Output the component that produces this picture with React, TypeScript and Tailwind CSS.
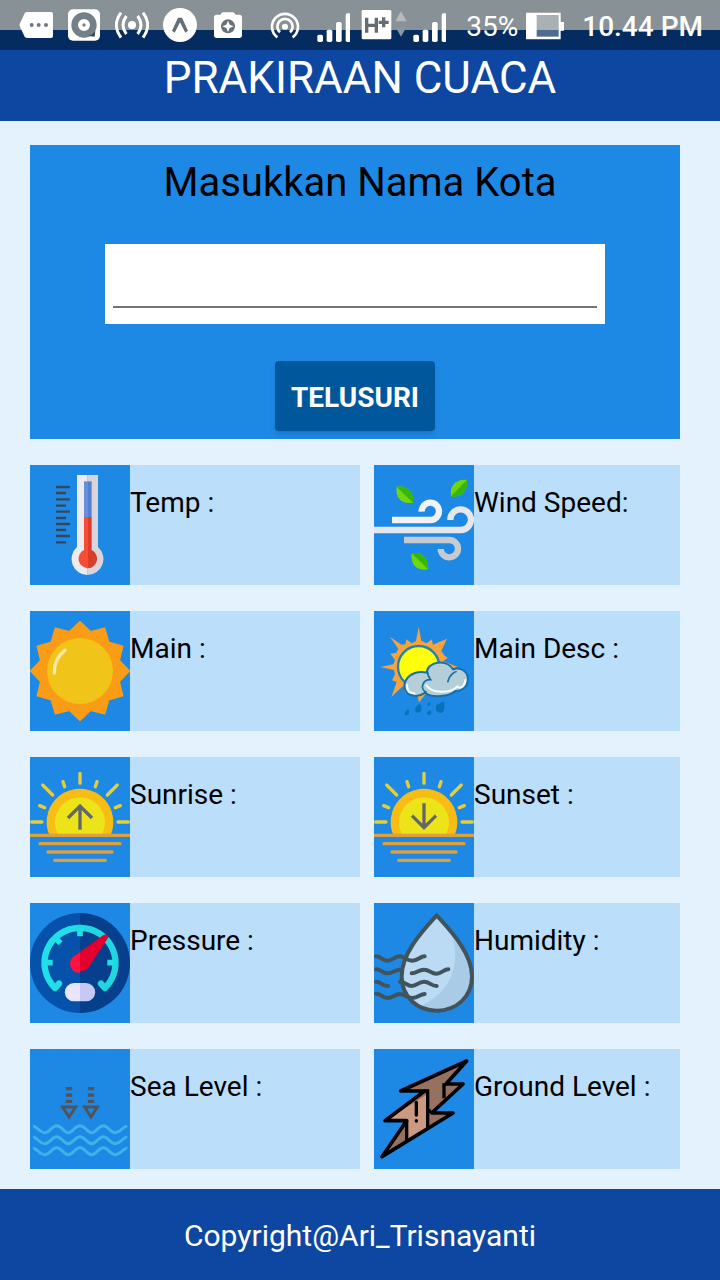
import type { ReactNode } from "react";

/* ---------- status bar ---------- */

function StatusIcon({ x, w = 102, className = "w-[34px]", children }: { x: number; w?: number; className?: string; children: ReactNode }) {
  return (
    <svg viewBox={`${x} 0 ${w} 150`} className={`h-[50px] shrink-0 ${className}`} fill="#fff" aria-hidden="true">
      {children}
    </svg>
  );
}

function SignalIcon({ className }: { className?: string }) {
  return (
    <StatusIcon x={948} className={className}>
      <rect x="952" y="104" width="17" height="22" rx="5" />
      <rect x="980" y="89" width="17" height="37" rx="5" />
      <rect x="1008" y="66" width="17" height="60" rx="5" />
      <rect x="1037" y="40" width="17" height="86" rx="5" />
    </StatusIcon>
  );
}

function StatusBar() {
  return (
    <div className="flex h-[50px] items-center bg-[linear-gradient(#889196_30px,#052c61_30px)] pr-[17px] pl-[19px] text-[28px] leading-8 text-white">
      <div className="flex gap-[14px]">
        <StatusIcon x={57}>
          <path d="M82 36H153Q159 36 159 42V108Q159 114 153 114H82Q77 114 74 110L60 80Q57 75 60 70L74 40Q77 36 82 36Z" />
          <g fill="#6d7880">
            <circle cx="95" cy="75" r="6" />
            <circle cx="116" cy="75" r="6" />
            <circle cx="138" cy="75" r="6" />
          </g>
        </StatusIcon>
        <StatusIcon x={201}>
          <rect x="204" y="28" width="96" height="94" rx="15" />
          <circle cx="252" cy="75" r="28" fill="none" stroke="#748087" strokeWidth="20" />
          <path d="M266 108Q280 103 286 92L284 110Z" fill="#32435a" />
          <circle cx="252" cy="75" r="5" fill="#748087" />
        </StatusIcon>
        <StatusIcon x={345}>
          <circle cx="396" cy="75" r="12" />
          <g fill="none" stroke="#fff" strokeWidth="9">
            <path d="M379 48Q359 75 379 102M413 48Q433 75 413 102M363 38Q335 75 363 113M429 38Q457 75 429 113" />
          </g>
        </StatusIcon>
        <StatusIcon x={489}>
          <circle cx="540" cy="75" r="51" />
          <path d="M516 92L534 53H546L564 92L556 98L540 67L524 98Z" fill="#637078" />
        </StatusIcon>
        <StatusIcon x={633}>
          <path d="M650 44H661L667 37H701L707 44H718Q726 44 726 52V106Q726 114 718 114H650Q642 114 642 106V52Q642 44 650 44Z" />
          <circle cx="684" cy="79" r="21" fill="#65727b" />
          <path d="M684 62L689 74L701 79L689 84L684 96L679 84L667 79L679 74Z" />
        </StatusIcon>
      </div>
      <div className="ml-auto flex items-center">
        <StatusIcon x={804}>
          <circle cx="855" cy="80" r="9" />
          <g fill="none" stroke="#fff" strokeWidth="8">
            <path d="M840 97A23 23 0 1 1 870 97M832 112A39 39 0 1 1 878 112" />
          </g>
        </StatusIcon>
        <SignalIcon className="ml-[14px] w-[34px]" />
        <StatusIcon x={1083} w={138} className="ml-[11px] w-[46px]">
          <rect x="1085" y="30" width="89" height="88" rx="4" />
          <path d="M1100 53V98M1129 53V98M1100 76H1129M1136 67H1166M1151 52V82" fill="none" stroke="#636d73" strokeWidth="10" />
          <path d="M1203 34L1220 64H1186Z" fill="#b4babd" />
          <path d="M1203 110L1220 80H1186Z" fill="#8796a8" />
        </StatusIcon>
        <SignalIcon className="ml-[5px] w-[34px]" />
        <span className="ml-5 pt-[3px]">35%</span>
        <StatusIcon x={1578} w={114} className="ml-2 w-[38px]">
          <path d="M1578 38H1682V66H1692V92H1682V118H1578Z" />
          <rect x="1610" y="45" width="66" height="45" fill="#a8b1b3" />
          <rect x="1610" y="90" width="66" height="20" fill="#506c91" />
        </StatusIcon>
        <time className="ml-[18px] pt-[3px] font-medium">10.44 PM</time>
      </div>
    </div>
  );
}

/* ---------- weather icons ---------- */

function Tile({ children }: { children: ReactNode }) {
  return (
    <svg viewBox="30 30 300 360" className="h-[120px] w-[100px] shrink-0 bg-[#1e88e5]" aria-hidden="true">
      {children}
    </svg>
  );
}

function Thermometer() {
  return (
    <Tile>
      <path d="M171 60H203V360A48 48 0 0 1 171 276Z" fill="#eeebef" />
      <path d="M203 60H234V276A48 48 0 0 1 203 360Z" fill="#d9d4dc" />
      <rect x="192" y="79" width="12" height="107" fill="#648fe0" />
      <rect x="204" y="79" width="11" height="107" fill="#5a7fca" />
      <path d="M204 186H192V285A29 29 0 0 0 204 340Z" fill="#fb4b32" />
      <path d="M204 186H215V285A29 29 0 0 1 204 340Z" fill="#d63f2b" />
      <g stroke="#34485c" strokeWidth="7">
        <path d="M108 96H150M108 133H150M108 170H150M108 207H150M108 243H150" />
        <path d="M108 114H138M108 152H138M108 189H138M108 225H138M108 262H138" />
      </g>
    </Tile>
  );
}

function Wind() {
  return (
    <Tile>
      <g fill="none" strokeWidth="19">
        <path d="M84 195H199A26 26 0 1 0 173 170" stroke="#f1f2f5" />
        <path d="M30 225H290A31 31 0 1 0 259 195" stroke="#e4e7ec" />
        <path d="M120 255H256A26 26 0 1 1 230 282" stroke="#c8cad1" />
      </g>
      <g id="leaf">
        <path d="M98 95C127 90 151 108 147 143C115 149 93 130 98 95Z" fill="#72d60f" />
        <path d="M98 95C127 90 151 108 147 143Z" fill="#35b60a" />
      </g>
      <use href="#leaf" x="45" y="200" />
      <path d="M308 75C280 71 255 90 261 124C292 129 313 108 308 75Z" fill="#72d60f" />
      <path d="M308 75L261 124C292 129 313 108 308 75Z" fill="#35b60a" />
    </Tile>
  );
}

const SUN_POINTS = Array.from({ length: 24 }, (_, i) => {
  const r = i % 2 ? 121 : 147;
  const a = (i * Math.PI) / 12;
  return `${(180 + r * Math.sin(a)).toFixed(1)},${(210 - r * Math.cos(a)).toFixed(1)}`;
}).join(" ");

function Sun() {
  return (
    <Tile>
      <polygon points={SUN_POINTS} fill="#fa9c16" stroke="#fa9c16" strokeWidth="6" strokeLinejoin="round" />
      <circle cx="180" cy="210" r="99" fill="#f0c419" />
      <path d="M103 216Q102 173 135 148" fill="none" stroke="#fce9a8" strokeWidth="10" strokeLinecap="round" />
    </Tile>
  );
}

function SunCloudRain() {
  return (
    <Tile>
      <path
        d="M164 78L172 119L188 127L203 115L207 131L249 113L232 150L240 162L251 171L237 181L282 198L240 211L165 304L157 267L130 262L124 279L118 254L82 288L98 243L84 238L93 220L90 207L49 198L88 190L93 177L79 158L97 155L103 143L78 108L113 131L124 130L127 115L143 127L156 120Z"
        fill="#f8a33a"
      />
      <circle cx="164" cy="197" r="62" fill="#ffff0a" stroke="#2681ab" strokeWidth="7" />
      <path
        d="M145 283C121 280 116 253 127 236C137 218 165 208 188 215C190 183 246 171 267 205C292 195 315 215 311 239C310 259 290 272 274 270C257 288 201 291 184 275C171 284 155 286 145 283Z"
        fill="#b5cfd9"
        stroke="#176fa8"
        strokeWidth="6"
      />
      <path d="M188 274C165 264 176 235 200 236C196 231 190 224 191 212M251 244C257 218 275 211 278 213" fill="none" stroke="#176fa8" strokeWidth="5" />
      <path d="M187 253C205 281 264 275 280 256C290 266 304 253 304 237M129 251C129 270 139 277 151 277" fill="none" stroke="#f4fcff" strokeWidth="6" strokeLinecap="round" />
      <g fill="#0872b9">
        <path d="M134 325C119 332 120 343 128 343C136 342 136 334 134 325ZM168 308C150 317 150 332 160 335C172 333 176 323 168 308ZM197 302C185 308 191 317 199 314ZM200 328C185 332 188 342 196 343C204 339 203 333 200 328ZM239 301L216 313C213 331 221 335 231 336C243 332 243 318 239 301Z" />
      </g>
    </Tile>
  );
}

function Horizon({ arrow }: { arrow: string }) {
  return (
    <Tile>
      <path d="M87 262A100 100 0 1 1 273 262Z" fill="#f7bd14" />
      <path d="M114 262A75 75 0 1 1 246 262Z" fill="#ece319" />
      <g fill="none" strokeWidth="10" strokeLinecap="round">
        <path d="M180 79V109M129 104L134 119M231 104L226 119M68 114L98 144M292 114L262 144M59 176L74 182M301 176L286 182M35 225H66M294 225H325" stroke="#e3ce3c" />
        <path d="M34 265H326M60 290H300M84 315H276M104 340H256" stroke="#dda03c" />
      </g>
      <path d={arrow} fill="none" stroke="#62676a" strokeWidth="10" />
    </Tile>
  );
}

function Gauge() {
  return (
    <Tile>
      <path d="M180 60A150 150 0 0 0 180 360Z" fill="#0652ab" />
      <path d="M180 60A150 150 0 0 1 180 360Z" fill="#06408c" />
      <g fill="none" strokeWidth="19" strokeLinecap="round" strokeLinejoin="round">
        <path d="M117 272L105 285A105 105 0 0 1 180 105" stroke="#21dfe7" />
        <path d="M180 105A105 105 0 0 1 255 285L243 272" stroke="#20d6df" />
      </g>
      <path d="M80 209H98M180 105V130M108 137L122 151M262 209H280" fill="none" stroke="#21dfe7" strokeWidth="17" />
      <path d="M249 127Q260 122 264 128Q266 134 260 141L205 224A27 27 0 1 1 162 190Z" fill="#e3002f" />
      <path d="M180 177L162 190A27 27 0 0 0 180 239Z" fill="#ff123f" />
      <path d="M180 270H162A27 27 0 0 0 162 325H180Z" fill="#e7e5ff" />
      <path d="M180 270H198A27 27 0 0 1 198 325H180Z" fill="#c4c9f6" />
    </Tile>
  );
}

function Droplet() {
  return (
    <Tile>
      <path d="M218 67C184 105 113 176 113 250C113 312 160 353 218 353C278 353 324 311 324 250C324 177 252 105 218 67Z" fill="#a9cbe6" />
      <path d="M218 67C184 105 113 176 113 250C113 292 134 323 166 340C245 309 293 235 266 130Z" fill="#bbdaf4" />
      <path d="M218 67C184 105 113 176 113 250C113 312 160 353 218 353C278 353 324 311 324 250C324 177 252 105 218 67Z" fill="none" stroke="#42545b" strokeWidth="12" strokeLinejoin="round" />
      <g fill="none" stroke="#42545b" strokeWidth="12" strokeLinecap="round">
        <path d="M36 190C51 189 53 203 70 203S92 190 107 190S127 203 145 203S168 190 182 190" />
        <path d="M36 229C51 228 53 241 70 241S92 230 108 230" />
        <path d="M143 241C159 241 163 230 180 230S201 242 217 242S239 229 253 229" />
        <path d="M36 266C51 265 53 279 72 279" />
        <path d="M108 266C125 265 127 279 143 279S163 266 180 266S201 279 218 279" />
        <path d="M36 302C51 301 53 315 70 315S92 303 107 303S127 315 145 315S168 303 182 303" />
      </g>
    </Tile>
  );
}

function SeaLevel() {
  return (
    <Tile>
      <path d="M30 75L75 30M30 150L150 30M30 225L225 30M60 270L300 30M135 270L330 75M210 270L330 150" stroke="#2b83d4" strokeWidth="5" opacity="0.4" />
      <path d="M147 144V194M213 144V194" stroke="#50555a" strokeWidth="19" strokeDasharray="10 9" />
      <path d="M128 204H167L147 234ZM194 204H232L213 234Z" fill="none" stroke="#50555a" strokeWidth="9" />
      <g fill="none" stroke="#3eb3e6" strokeWidth="9" strokeLinecap="round">
        <path id="wave" d="M43 262C55 268 60 281 75 281C92 281 94 260 110 260S130 281 145 281S164 260 180 260S200 281 215 281S234 260 250 260S268 281 285 281S307 265 318 262" />
        <use href="#wave" y="33" />
        <use href="#wave" y="66" />
      </g>
    </Tile>
  );
}

function GroundLevel() {
  return (
    <Tile>
      <path d="M308 66L110 156H182L63 245H128L54 353L267 222H203L297 135H246Z" fill="#96715f" />
      <path d="M190 166L63 245H128V307L190 268Z" fill="#cb9a81" />
      <path d="M308 66L110 156H182L63 245H128L54 353L267 222H203L297 135H246Z" fill="none" stroke="#000" strokeWidth="11" strokeLinejoin="round" />
      <path d="M178 156H191V268M240 133V178M128 245V305M196 211V222" fill="none" stroke="#000" strokeWidth="10" />
      <path d="M157 190V228M157 245V246" stroke="#000" strokeWidth="10" strokeLinecap="round" />
    </Tile>
  );
}

/* ---------- page ---------- */

const READINGS: { label: string; icon: ReactNode }[] = [
  { label: "Temp :", icon: <Thermometer /> },
  { label: "Wind Speed:", icon: <Wind /> },
  { label: "Main :", icon: <Sun /> },
  { label: "Main Desc :", icon: <SunCloudRain /> },
  { label: "Sunrise :", icon: <Horizon arrow="M180 248V178M144 213L180 177L216 213" /> },
  { label: "Sunset :", icon: <Horizon arrow="M180 169V241M144 206L180 242L216 206" /> },
  { label: "Pressure :", icon: <Gauge /> },
  { label: "Humidity :", icon: <Droplet /> },
  { label: "Sea Level :", icon: <SeaLevel /> },
  { label: "Ground Level :", icon: <GroundLevel /> },
];

export default function App() {
  return (
    <div className="flex min-h-screen flex-col bg-[#e3f2fd] font-[Roboto,sans-serif] text-black">
      <StatusBar />
      <header className="h-[71px] bg-[#0d47a1] text-center text-white">
        <h1 className="text-[44px] leading-[56px]">PRAKIRAAN CUACA</h1>
      </header>

      <main className="flex-1 pt-6 pr-10 pb-5 pl-[30px]">
        <form className="flex flex-col items-center bg-[#1e88e5] pt-[14px] pb-2" onSubmit={(e) => e.preventDefault()}>
          <label htmlFor="city" className="pl-[10px] text-[40px] leading-[48px]">
            Masukkan Nama Kota
          </label>
          <div className="mt-[37px] w-[500px] max-w-full bg-white px-2 pt-2 pb-4">
            <input id="city" type="text" className="block h-14 w-full border-b-2 border-[#737373] text-[28px] outline-none" />
          </div>
          <button type="submit" className="mt-[37px] h-[70px] rounded bg-[#01579b] px-4 pt-[3px] text-[28px] font-bold text-white shadow-md">
            TELUSURI
          </button>
        </form>

        <ul className="mt-[26px] grid grid-cols-[330fr_306fr] gap-x-[14px] gap-y-[26px]">
          {READINGS.map(({ label, icon }) => (
            <li key={label} className="flex bg-[#bbdefb]">
              {icon}
              <span className="pt-[22px] text-[28px] leading-8">{label}</span>
            </li>
          ))}
        </ul>
      </main>

      <footer className="h-[91px] bg-[#0d47a1] pt-[31px] text-center text-[30px] leading-8 text-white">Copyright@Ari_Trisnayanti</footer>
    </div>
  );
}
